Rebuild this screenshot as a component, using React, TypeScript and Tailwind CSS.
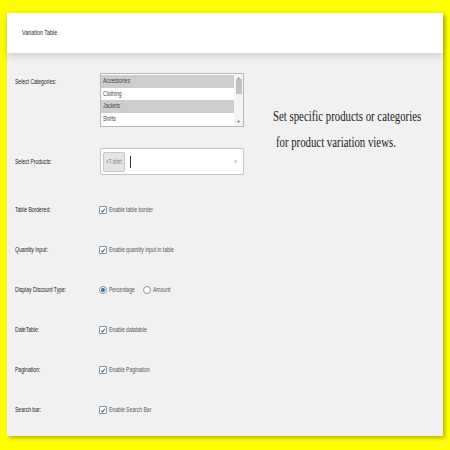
import React from 'react';

const Sq: React.FC<{ children: React.ReactNode; className?: string }> = ({ children, className = '' }) => (
  <span className={`inline-block origin-left scale-x-[0.72] whitespace-nowrap ${className}`}>{children}</span>
);

const Check: React.FC = () => (
  <span className="flex h-[8px] w-[8px] shrink-0 items-center justify-center rounded-[1px] border border-[#8c8f94] bg-white">
    <svg viewBox="0 0 10 10" className="h-[7px] w-[7px]">
      <path d="M2 5.2 L4.2 7.4 L8.2 2.4" fill="none" stroke="#2271b1" strokeWidth="1.7" />
    </svg>
  </span>
);

const Radio: React.FC<{ on?: boolean }> = ({ on }) => (
  <span className="flex h-[8px] w-[8px] shrink-0 items-center justify-center rounded-full border border-[#8c8f94] bg-white">
    {on && <span className="h-[4px] w-[4px] rounded-full bg-[#2271b1]" />}
  </span>
);

const Label: React.FC<{ text: string }> = ({ text }) => (
  <div className="w-[85px] shrink-0 overflow-hidden text-[7px] leading-[8px] text-[#1d2327]">
    <Sq>{text}</Sq>
  </div>
);

const CheckRow: React.FC<{ label: string; text: string }> = ({ label, text }) => (
  <div className="flex h-[40px] items-center">
    <Label text={label} />
    <div className="-ml-[1px] flex w-[140px] items-center gap-[2px] overflow-hidden text-[7px] leading-[8px] text-[#50575e]">
      <Check />
      <Sq>{text}</Sq>
    </div>
  </div>
);

const options = [
  { name: 'Accessories', sel: true },
  { name: 'Clothing', sel: false },
  { name: 'Jackets', sel: true },
  { name: 'Shirts', sel: false },
];

export default function App() {
  return (
    <div className="min-h-[450px] w-[450px] overflow-hidden bg-[#ffff00] pl-[7px] pt-[13px]" style={{ fontFamily: '"Liberation Sans", Arial, sans-serif' }}>
      <div className="flex h-[423px] w-[436px] flex-col bg-[#f1f1f1] shadow-[2px_2px_4px_rgba(0,0,0,0.3)]">
        {/* header */}
        <div className="relative z-10 flex h-[40px] shrink-0 items-center bg-white pl-[15px] text-[7.5px] text-[#23282d] shadow-[0_3px_8px_rgba(0,0,0,0.14)]">
          <Sq>Variation Table</Sq>
        </div>

        <div className="flex flex-col pl-[8px] pt-[20px]">
          <div className="flex">
            <div className="flex flex-col">
              {/* categories */}
              <div className="flex">
                <div className="pt-[5px]">
                  <Label text="Select Categories:" />
                </div>
                <div className="flex h-[54px] w-[144px] border border-[#b4b9be] bg-white">
                  <div className="flex flex-1 flex-col overflow-hidden py-[1px]">
                    {options.map((o) => (
                      <div
                        key={o.name}
                        className={`flex h-[13px] items-center pl-[2px] text-[7px] text-[#3c434a] ${o.sel ? 'bg-[#cdcdcd]' : ''}`}
                      >
                        <Sq>{o.name}</Sq>
                      </div>
                    ))}
                  </div>
                  <div className="flex w-[9px] flex-col items-center justify-between bg-[#f4f4f4] py-[1px]">
                    <span className="text-[4px] leading-[6px] text-[#888]">▲</span>
                    <div className="h-[15px] w-[6px] -mt-[2px] bg-[#c1c1c1]" />
                    <div className="flex-1" />
                    <span className="text-[4px] leading-[6px] text-[#555]">▼</span>
                  </div>
                </div>
              </div>

              {/* products */}
              <div className="mt-[21px] flex items-center">
                <Label text="Select Products:" />
                <div className="flex h-[27px] w-[144px] items-center rounded-[2px] border border-[#c3c4c7] bg-white pl-[2px] pr-[6px]">
                  <span className="flex h-[20px] w-[22px] items-center overflow-hidden rounded-[2px] border border-[#c6c6c6] bg-[#e4e4e4] pl-[2px] text-[6.5px] text-[#777]">
                    <Sq>×T-shirt</Sq>
                  </span>
                  <span className="ml-[5px] h-[12px] w-[1px] bg-[#333]" />
                  <span className="ml-auto text-[6px] text-[#999]">x</span>
                </div>
              </div>
            </div>

            {/* side note */}
            <div
              className="ml-[29px] mt-[30px] w-[160px] shrink-0 overflow-hidden text-[15px] leading-[26px] text-[#1a1a1a]"
              style={{ fontFamily: '"Liberation Serif", "Times New Roman", serif' }}
            >
              <Sq className="block">Set specific products or categories</Sq>
              <Sq className="block pl-[4px]">for product variation views.</Sq>
            </div>
          </div>

          <div className="mt-[15px] flex flex-col">
            <CheckRow label="Table Bordered:" text="Enable table border" />
            <CheckRow label="Quantity Input:" text="Enable quantity input in table" />
            <div className="flex h-[40px] items-center">
              <Label text="Display Discount Type:" />
              <div className="-ml-[1px] flex items-center text-[7px] leading-[8px] text-[#50575e]">
                <Radio on />
                <span className="ml-[2px] w-[34px] overflow-hidden">
                  <Sq>Percentage</Sq>
                </span>
                <Radio />
                <span className="ml-[2px] w-[30px] overflow-hidden">
                  <Sq>Amount</Sq>
                </span>
              </div>
            </div>
            <CheckRow label="DateTable:" text="Enable datatable" />
            <CheckRow label="Pagination:" text="Enable Pagination" />
            <CheckRow label="Search bar:" text="Enable Search Bar" />
          </div>
        </div>
      </div>
    </div>
  );
}
